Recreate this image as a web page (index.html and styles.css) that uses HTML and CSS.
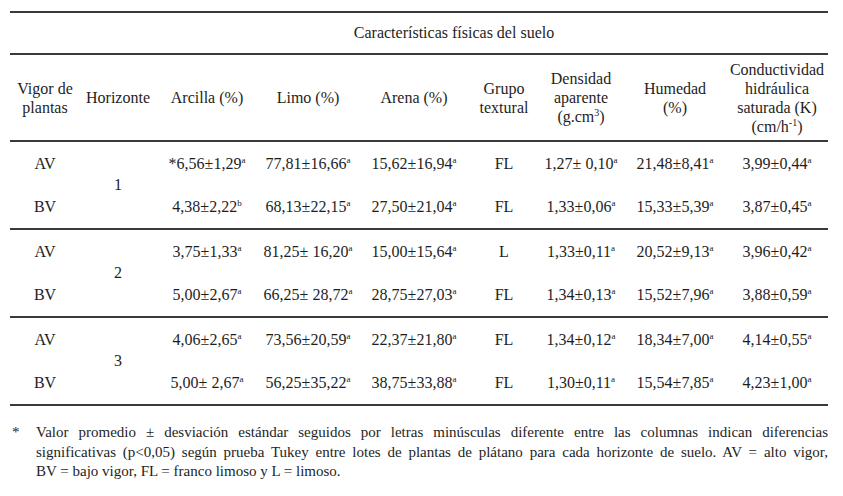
FILE: index.html
```html
<!DOCTYPE html>
<html lang="es">
<head>
<meta charset="utf-8">
<link rel="stylesheet" href="styles.css">
</head>
<body>
<div class="page">
<table class="data">
  <colgroup>
    <col class="c1"><col class="c2"><col class="c3"><col class="c4"><col class="c5"><col class="c6"><col class="c7"><col class="c8"><col class="c9">
  </colgroup>
  <thead>
    <tr class="title-row">
      <th></th>
      <th colspan="8">Características físicas del suelo</th>
    </tr>
    <tr class="head-row">
      <th>Vigor de<br>plantas</th>
      <th>Horizonte</th>
      <th>Arcilla (%)</th>
      <th>Limo (%)</th>
      <th>Arena (%)</th>
      <th>Grupo<br>textural</th>
      <th>Densidad<br>aparente<br>(g.cm<sup class="exp">3</sup>)</th>
      <th>Humedad<br>(%)</th>
      <th>Conductividad<br>hidráulica<br>saturada (K)<br>(cm/h<sup class="exp">-1</sup>)</th>
    </tr>
  </thead>
  <tbody>
    <tr><td>AV</td><td rowspan="2">1</td><td>*6,56±1,29<sup>a</sup></td><td>77,81±16,66<sup>a</sup></td><td>15,62±16,94<sup>a</sup></td><td>FL</td><td>1,27± 0,10<sup>a</sup></td><td>21,48±8,41<sup>a</sup></td><td>3,99±0,44<sup>a</sup></td></tr>
    <tr><td>BV</td><td>4,38±2,22<sup>b</sup></td><td>68,13±22,15<sup>a</sup></td><td>27,50±21,04<sup>a</sup></td><td>FL</td><td>1,33±0,06<sup>a</sup></td><td>15,33±5,39<sup>a</sup></td><td>3,87±0,45<sup>a</sup></td></tr>
  </tbody>
  <tbody>
    <tr><td>AV</td><td rowspan="2">2</td><td>3,75±1,33<sup>a</sup></td><td>81,25± 16,20<sup>a</sup></td><td>15,00±15,64<sup>a</sup></td><td>L</td><td>1,33±0,11<sup>a</sup></td><td>20,52±9,13<sup>a</sup></td><td>3,96±0,42<sup>a</sup></td></tr>
    <tr><td>BV</td><td>5,00±2,67<sup>a</sup></td><td>66,25± 28,72<sup>a</sup></td><td>28,75±27,03<sup>a</sup></td><td>FL</td><td>1,34±0,13<sup>a</sup></td><td>15,52±7,96<sup>a</sup></td><td>3,88±0,59<sup>a</sup></td></tr>
  </tbody>
  <tbody>
    <tr><td>AV</td><td rowspan="2">3</td><td>4,06±2,65<sup>a</sup></td><td>73,56±20,59<sup>a</sup></td><td>22,37±21,80<sup>a</sup></td><td>FL</td><td>1,34±0,12<sup>a</sup></td><td>18,34±7,00<sup>a</sup></td><td>4,14±0,55<sup>a</sup></td></tr>
    <tr><td>BV</td><td>5,00± 2,67<sup>a</sup></td><td>56,25±35,22<sup>a</sup></td><td>38,75±33,88<sup>a</sup></td><td>FL</td><td>1,30±0,11<sup>a</sup></td><td>15,54±7,85<sup>a</sup></td><td>4,23±1,00<sup>a</sup></td></tr>
  </tbody>
</table>
<div class="note">
  <span class="mark">*</span>
  <div class="note-text">
    <span class="line just">Valor promedio ± desviación estándar seguidos por letras minúsculas diferente entre las columnas indican diferencias</span>
    <span class="line just">significativas (p&lt;0,05) según prueba Tukey entre lotes de plantas de plátano para cada horizonte de suelo. AV = alto vigor,</span>
    <span class="line">BV = bajo vigor, FL = franco limoso y L = limoso.</span>
  </div>
</div>
</div>
</body>
</html>
```

FILE: styles.css
```css
html, body {
  margin: 0;
  padding: 0;
  background: #ffffff;
}

body {
  font-family: "Liberation Serif", "Times New Roman", serif;
  color: #1e1e1e;
}

.page {
  padding: 11px 0 0 10px;
  width: 818px;
}

.data {
  width: 818px;
  border-collapse: collapse;
  table-layout: fixed;
  font-size: 16px;
  border-top: 2px solid #3a3a3a;
  border-bottom: 2px solid #3a3a3a;
}

.c1 { width: 70px; }
.c2 { width: 76px; }
.c3 { width: 102px; }
.c4 { width: 100px; }
.c5 { width: 112px; }
.c6 { width: 68px; }
.c7 { width: 86px; }
.c8 { width: 102px; }
.c9 { width: 102px; }

.data th,
.data td {
  padding: 0;
  text-align: center;
  vertical-align: middle;
  font-weight: normal;
}

.title-row {
  height: 42px;
  border-bottom: 2px solid #3a3a3a;
}

.head-row {
  height: 87px;
  border-bottom: 2px solid #3a3a3a;
}

.head-row th {
  line-height: 19px;
}

.data tbody {
  border-bottom: 2px solid #3a3a3a;
}

.data tbody tr {
  height: 44px;
}

.data td {
  line-height: 18px;
  white-space: nowrap;
}

.data td sup {
  font-size: 9px;
  line-height: 0;
  vertical-align: 6px;
}

.data th sup.exp {
  font-size: 10px;
  line-height: 0;
  vertical-align: 6px;
}

.note {
  display: flex;
  margin-top: 17px;
  font-size: 15px;
  line-height: 19.5px;
}

.mark {
  width: 26px;
  flex: none;
  padding-left: 2px;
  box-sizing: border-box;
}

.note-text {
  flex: 1;
}

.line {
  display: block;
}

.just {
  text-align: justify;
  text-align-last: justify;
}
```
